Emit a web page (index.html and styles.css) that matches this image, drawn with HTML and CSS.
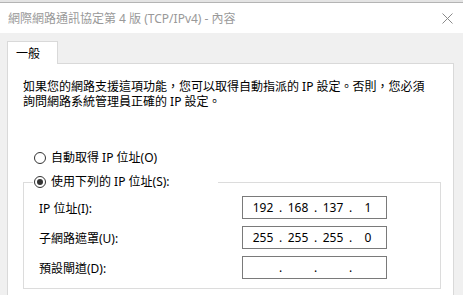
FILE: index.html
```html
<!DOCTYPE html>
<html lang="zh-Hant">
<head>
  <meta charset="UTF-8">
  <title>網際網路通訊協定第 4 版 (TCP/IPv4) - 內容</title>
  <link rel="stylesheet" href="styles.css">
</head>
<body>
  <!-- Window behind -->
  <div class="behind"></div>

  <!-- Title bar -->
  <div class="titlebar">
    <span class="title">網際網路通訊協定第 4 版 (TCP/IPv4) - 內容</span>
    <svg class="close" width="11" height="11" viewBox="0 0 11 11">
      <path d="M0.5 0.5 L10.5 10.5 M10.5 0.5 L0.5 10.5" stroke="#8a8a8a" stroke-width="1" fill="none"/>
    </svg>
  </div>

  <!-- Dialog -->
  <div class="dialog">
    <div class="tab">一般</div>
    <div class="panel">
      <div class="intro">
        <div class="intro-line">如果您的網路支援這項功能，您可以取得自動指派的 IP 設定。否則，您必須</div>
        <div class="intro-line">詢問網路系統管理員正確的 IP 設定。</div>
      </div>

      <label class="radio-row">
        <span class="radio"></span>
        <span>自動取得 IP 位址(O)</span>
      </label>

      <fieldset class="group">
        <legend class="radio-row">
          <span class="radio checked"></span>
          <span>使用下列的 IP 位址(S):</span>
        </legend>
        <div class="field-row">
          <span class="field-label">IP 位址(I):</span>
          <div class="ip-box">
            <span class="seg">192</span><span class="dot">.</span><span class="seg">168</span><span class="dot">.</span><span class="seg">137</span><span class="dot">.</span><span class="seg">1</span>
          </div>
        </div>
        <div class="field-row">
          <span class="field-label">子網路遮罩(U):</span>
          <div class="ip-box">
            <span class="seg">255</span><span class="dot">.</span><span class="seg">255</span><span class="dot">.</span><span class="seg">255</span><span class="dot">.</span><span class="seg">0</span>
          </div>
        </div>
        <div class="field-row">
          <span class="field-label">預設閘道(D):</span>
          <div class="ip-box">
            <span class="seg"></span><span class="dot">.</span><span class="seg"></span><span class="dot">.</span><span class="seg"></span><span class="dot">.</span><span class="seg"></span>
          </div>
        </div>
      </fieldset>
    </div>
  </div>
</body>
</html>
```

FILE: styles.css
```css
* {
  margin: 0;
  padding: 0;
  box-sizing: border-box;
}

html, body {
  height: 295px;
  overflow: hidden;
}

body {
  font-family: "Noto Sans", "Noto Sans CJK TC", sans-serif;
  font-size: 12px;
  color: #000;
  background-color: #f0f0f0;
}

/* Window behind */
.behind {
  height: 3px;
  background-color: #e4e4e4;
  border-bottom: 1px solid #b4b4b4;
}

/* Title bar */
.titlebar {
  height: 30px;
  background-color: #fff;
  display: flex;
  align-items: center;
  justify-content: space-between;
  padding: 0 10px 0 8px;
}

.title {
  color: #999;
  line-height: 14px;
  padding-top: 1px;
}

.close {
  display: block;
  margin-top: 1px;
}

/* Dialog body */
.dialog {
  padding: 8px 9px 0 7px;
}

.tab {
  position: relative;
  z-index: 1;
  width: 51px;
  height: 23px;
  margin-bottom: -1px;
  padding: 5px 0 0 8px;
  line-height: 13px;
  background-color: #fff;
  border: 1px solid #d9d9d9;
  border-bottom: none;
}

.panel {
  width: 447px;
  height: 235px;
  background-color: #fff;
  border: 1px solid #d9d9d9;
  padding: 15px 15px 0 15px;
}

.intro-line {
  height: 15px;
  line-height: 15px;
  white-space: nowrap;
}

/* Radio buttons */
.radio-row {
  display: flex;
  align-items: center;
  height: 16px;
  line-height: 16px;
}

.panel > .radio-row {
  margin-top: 41px;
  padding-left: 11px;
}

.radio {
  width: 12px;
  height: 12px;
  border: 1px solid #333;
  border-radius: 50%;
  margin-right: 5px;
  background-color: #fff;
  display: flex;
  align-items: center;
  justify-content: center;
}

.radio.checked::after {
  content: "";
  width: 6px;
  height: 6px;
  border-radius: 50%;
  background-color: #333;
}

/* Group box */
.group {
  width: 418px;
  margin-top: 8px;
  border: 1px solid #dcdcdc;
  padding: 6px 15px 9px 15px;
}

.group legend {
  width: 185px;
  margin-left: -6px;
  padding-left: 1px;
  background-color: #fff;
}

.field-row {
  display: flex;
  align-items: center;
  height: 23px;
  margin-bottom: 7px;
}

.field-row:last-child {
  margin-bottom: 0;
}

.field-label {
  width: 203px;
}

.ip-box {
  display: flex;
  align-items: center;
  width: 145px;
  height: 23px;
  border: 1px solid #7a7a7a;
  padding-left: 6px;
}

.seg {
  width: 28px;
  text-align: center;
}

.dot {
  width: 7px;
  text-align: center;
}
```
